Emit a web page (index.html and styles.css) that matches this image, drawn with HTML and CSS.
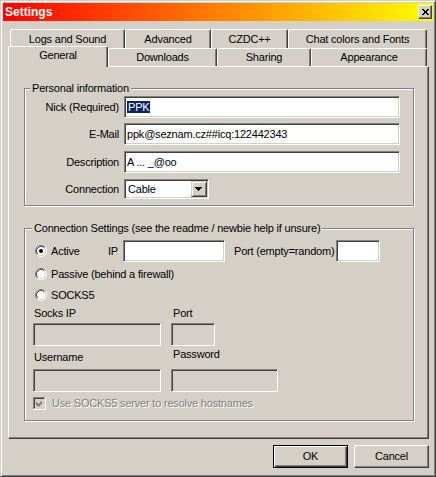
FILE: index.html
```html
<!DOCTYPE html>
<html>
<head>
<meta charset="utf-8">
<title>Settings</title>
<link rel="stylesheet" href="styles.css">
</head>
<body>
<div class="window">
  <div class="titlebar">
    <span class="title">Settings</span>
    <span class="closebtn">
      <svg width="12" height="12" viewBox="0 0 12 12" shape-rendering="crispEdges">
        <path d="M3 3 L9 9 M4 3 L10 9 M9 3 L3 9 M10 3 L4 9" stroke="#000" stroke-width="1" fill="none"/>
      </svg>
    </span>
  </div>

  <div class="tabs">
    <div class="tabrow row1">
      <div class="tab t-logs">Logs and Sound</div>
      <div class="tab t-adv">Advanced</div>
      <div class="tab t-czdc">CZDC++</div>
      <div class="tab t-chat">Chat colors and Fonts</div>
    </div>
    <div class="tabrow row2">
      <div class="tab t-gen sel">General</div>
      <div class="tab t-down">Downloads</div>
      <div class="tab t-share">Sharing</div>
      <div class="tab t-app">Appearance</div>
    </div>
  </div>

  <div class="panel">
    <div class="group g1">
      <div class="legend">Personal information</div>
      <div class="frow r1">
        <span class="flabel">Nick (Required)</span>
        <div class="field wide"><span class="hl">PPK</span></div>
      </div>
      <div class="frow r2">
        <span class="flabel">E-Mail</span>
        <div class="field wide">ppk@seznam.cz##icq:122442343</div>
      </div>
      <div class="frow r3">
        <span class="flabel">Description</span>
        <div class="field wide">A ... _@oo</div>
      </div>
      <div class="frow r4">
        <span class="flabel">Connection</span>
        <div class="combo">
          <span class="combotext">Cable</span>
          <span class="dropbtn">
            <svg width="14" height="14" viewBox="0 0 14 14" shape-rendering="crispEdges">
              <path d="M3 5 H10 V6 H9 V7 H8 V8 H7 V9 H6 V8 H5 V7 H4 V6 H3 Z" fill="#000"/>
            </svg>
          </span>
        </div>
      </div>
    </div>

    <div class="group g2">
      <div class="legend">Connection Settings (see the readme / newbie help if unsure)</div>
      <div class="crow active">
        <div class="opt optw">
          <svg class="radio" width="12" height="12" viewBox="0 0 12 12">
            <circle cx="6" cy="6" r="5" fill="#fff"/>
            <path d="M2.11 9.89 A5.5 5.5 0 0 1 9.89 2.11" stroke="#808080" fill="none"/>
            <path d="M9.89 2.11 A5.5 5.5 0 0 1 2.11 9.89" stroke="#fff" fill="none"/>
            <path d="M2.82 9.18 A4.5 4.5 0 0 1 9.18 2.82" stroke="#404040" fill="none"/>
            <path d="M9.18 2.82 A4.5 4.5 0 0 1 2.82 9.18" stroke="#d4d0c8" fill="none"/>
            <circle cx="6" cy="6" r="2" fill="#000"/>
          </svg>
          <span>Active</span>
        </div>
        <span class="iplbl">IP</span>
        <div class="field ipfield"></div>
        <span class="portlbl">Port (empty=random)</span>
        <div class="field portfield"></div>
      </div>
      <div class="crow passive">
        <div class="opt">
          <svg class="radio" width="12" height="12" viewBox="0 0 12 12">
            <circle cx="6" cy="6" r="5" fill="#fff"/>
            <path d="M2.11 9.89 A5.5 5.5 0 0 1 9.89 2.11" stroke="#808080" fill="none"/>
            <path d="M9.89 2.11 A5.5 5.5 0 0 1 2.11 9.89" stroke="#fff" fill="none"/>
            <path d="M2.82 9.18 A4.5 4.5 0 0 1 9.18 2.82" stroke="#404040" fill="none"/>
            <path d="M9.18 2.82 A4.5 4.5 0 0 1 2.82 9.18" stroke="#d4d0c8" fill="none"/>
          </svg>
          <span>Passive (behind a firewall)</span>
        </div>
      </div>
      <div class="crow socks">
        <div class="opt">
          <svg class="radio" width="12" height="12" viewBox="0 0 12 12">
            <circle cx="6" cy="6" r="5" fill="#fff"/>
            <path d="M2.11 9.89 A5.5 5.5 0 0 1 9.89 2.11" stroke="#808080" fill="none"/>
            <path d="M9.89 2.11 A5.5 5.5 0 0 1 2.11 9.89" stroke="#fff" fill="none"/>
            <path d="M2.82 9.18 A4.5 4.5 0 0 1 9.18 2.82" stroke="#404040" fill="none"/>
            <path d="M9.18 2.82 A4.5 4.5 0 0 1 2.82 9.18" stroke="#d4d0c8" fill="none"/>
          </svg>
          <span>SOCKS5</span>
        </div>
      </div>
      <div class="lrow lrow1">
        <span class="col1 lbl">Socks IP</span>
        <span class="col2 lbl">Port</span>
      </div>
      <div class="irow irow1">
        <div class="field dis col1"></div>
        <div class="field dis col2 sport"></div>
      </div>
      <div class="lrow lrow2">
        <span class="col1 lbl lbl-low">Username</span>
        <span class="col2 lbl lbl-high">Password</span>
      </div>
      <div class="irow irow2">
        <div class="field dis col1"></div>
        <div class="field dis col2 spass"></div>
      </div>
      <div class="chkrow">
        <svg class="chk" width="13" height="13" viewBox="0 0 13 13" shape-rendering="crispEdges">
          <rect x="0" y="0" width="13" height="13" fill="#d4d0c8"/>
          <path d="M0 0.5 H12 M0.5 0 V12" stroke="#808080"/>
          <path d="M1 1.5 H11 M1.5 1 V11" stroke="#404040"/>
          <path d="M0 12.5 H13 M12.5 0 V13" stroke="#fff"/>
          <path d="M3 5 L5 7 L9 3 V6 L5 10 L3 8 Z" fill="#808080"/>
        </svg>
        <span class="distext">Use SOCKS5 server to resolve hostnames</span>
      </div>
    </div>
  </div>

  <div class="buttons">
    <div class="btn default"><span>OK</span></div>
    <div class="btn">Cancel</div>
  </div>
</div>
</body>
</html>
```
FILE: styles.css
```css
html, body {
  margin: 0;
  padding: 0;
  background: #d4d0c8;
}

body {
  font-family: "Liberation Sans", Arial, sans-serif;
  font-size: 11px;
  line-height: 13px;
  letter-spacing: -0.2px;
  color: #000;
}

.window {
  width: 436px;
  height: 477px;
  box-sizing: border-box;
  background: #d4d0c8;
  border: 1px solid;
  border-color: #d4d0c8 #404040 #404040 #d4d0c8;
  box-shadow: inset 1px 1px 0 #fff, inset -1px -1px 0 #808080;
  padding: 2px 2px 2px 2px;
}

/* Title bar */
.titlebar {
  height: 18px;
  display: flex;
  align-items: center;
  justify-content: space-between;
  background: linear-gradient(to right, #ff0000 0%, #ff8000 50%, #ffff00 100%);
  padding-left: 2px;
}

.title {
  color: #fff;
  font-weight: bold;
  font-size: 12px;
  line-height: 14px;
  letter-spacing: 0;
}

.closebtn {
  width: 14px;
  height: 14px;
  box-sizing: border-box;
  background: #d4d0c8;
  border: 1px solid;
  border-color: #fff #404040 #404040 #fff;
  box-shadow: inset -1px -1px 0 #808080;
  display: flex;
  align-items: center;
  justify-content: center;
  margin-right: 1px;
}

.closebtn svg {
  display: block;
  margin-left: -1px;
  margin-top: -1px;
}

/* Tabs */
.tabs {
  margin-top: 8px;
}

.tabrow {
  display: flex;
}

.row1 {
  height: 19px;
  padding-left: 7px;
}

.row2 {
  height: 18px;
  padding-left: 5px;
}

.tab {
  box-sizing: border-box;
  background: #d4d0c8;
  border-left: 1px solid #fff;
  border-top: 1px solid #fff;
  border-right: 1px solid #404040;
  box-shadow: inset -1px 0 0 #808080;
  border-top-left-radius: 2px;
  border-top-right-radius: 2px;
  text-align: center;
  white-space: nowrap;
}

.row1 .tab {
  height: 19px;
  padding-top: 3px;
}

.row2 .tab {
  height: 18px;
  padding-top: 2px;
}

.t-logs { width: 115px; }
.t-adv { width: 86px; }
.t-czdc { width: 77px; }
.t-chat { width: 139px; }

.t-gen { width: 100px; }
.t-down { width: 109px; }
.t-share { width: 94px; }
.t-app { width: 116px; }

.row2 .tab.sel {
  position: relative;
  z-index: 1;
  height: 21px;
  margin-top: -2px;
  padding-top: 2px;
}

/* Panel */
.panel {
  box-sizing: border-box;
  width: 421px;
  height: 373px;
  margin-left: 5px;
  border-top: 1px solid #fff;
  border-left: 1px solid #fff;
  border-right: 1px solid #404040;
  border-bottom: 1px solid #404040;
  box-shadow: inset -1px -1px 0 #808080;
  padding-left: 15px;
  padding-top: 21px;
}

.group {
  box-sizing: border-box;
  width: 390px;
  border: 1px solid #808080;
  box-shadow: 1px 1px 0 #fff, inset 1px 1px 0 #fff;
}

.g1 {
  height: 118px;
}

.g2 {
  height: 193px;
  margin-top: 22px;
  padding-left: 8px;
}

.legend {
  display: block;
  width: max-content;
  height: 13px;
  margin-top: -7px;
  margin-left: 5px;
  padding: 0 2px;
  background: #d4d0c8;
  white-space: nowrap;
}

.g2 .legend {
  margin-left: -1px;
}

/* Personal info rows */
.frow {
  display: flex;
  align-items: center;
}

.r1 { margin-top: 1px; }
.r2 { margin-top: 5px; }
.r3 { margin-top: 6px; }
.r4 { margin-top: 6px; }

.flabel {
  width: 94px;
  text-align: right;
  margin-right: 5px;
  white-space: nowrap;
}

.field {
  box-sizing: border-box;
  height: 22px;
  background: #fff;
  border: 1px solid;
  border-color: #808080 #fff #fff #808080;
  box-shadow: inset 1px 1px 0 #404040, inset -1px -1px 0 #d4d0c8;
  padding: 4px 0 0 2px;
  white-space: nowrap;
  overflow: hidden;
}

.field.wide {
  width: 276px;
}

.hl {
  background: #0a246a;
  color: #fff;
  padding: 0 1px;
}

.combo {
  box-sizing: border-box;
  width: 85px;
  height: 20px;
  background: #fff;
  border: 1px solid;
  border-color: #808080 #fff #fff #808080;
  box-shadow: inset 1px 1px 0 #404040, inset -1px -1px 0 #d4d0c8;
  padding: 1px 1px 1px 3px;
  display: flex;
  align-items: center;
  justify-content: space-between;
}

.combotext {
  padding-top: 1px;
}

.dropbtn {
  box-sizing: border-box;
  width: 16px;
  height: 16px;
  background: #d4d0c8;
  border: 1px solid;
  border-color: #d4d0c8 #404040 #404040 #d4d0c8;
  box-shadow: inset 1px 1px 0 #fff, inset -1px -1px 0 #808080;
  display: flex;
  align-items: center;
  justify-content: center;
}

.dropbtn svg {
  display: block;
}

/* Connection settings */
.crow {
  display: flex;
  align-items: center;
}

.active {
  height: 22px;
  margin-top: 5px;
}

.passive {
  height: 20px;
  margin-top: 2px;
}

.socks {
  height: 20px;
  margin-top: 1px;
}

.opt {
  display: flex;
  align-items: center;
  margin-left: 2px;
  white-space: nowrap;
}

.optw {
  width: 73px;
}

.radio {
  display: block;
  flex: none;
  margin-right: 4px;
}

.iplbl {
  width: 10px;
  margin-right: 5px;
}

.ipfield {
  width: 102px;
}

.portlbl {
  width: 102px;
  margin-left: 9px;
  white-space: nowrap;
}

.portfield {
  width: 44px;
}

.lrow {
  display: flex;
}

.lrow1 {
  height: 14px;
  margin-top: 2px;
}

.lrow2 {
  height: 16px;
  margin-top: 2px;
}

.col1 {
  width: 128px;
  flex: none;
}

.col2 {
  margin-left: 10px;
}

.lbl {
  padding-left: 1px;
  white-space: nowrap;
}

.lbl-low {
  align-self: flex-end;
}

.lbl-high {
  align-self: flex-start;
}

.irow {
  display: flex;
}

.irow1 {
  margin-top: 2px;
}

.irow2 {
  margin-top: 5px;
}

.field.dis {
  height: 23px;
  background: #d4d0c8;
}

.sport {
  width: 44px;
}

.spass {
  width: 107px;
}

.chkrow {
  display: flex;
  align-items: center;
  height: 13px;
  margin-top: 5px;
}

.chk {
  display: block;
  flex: none;
  margin-right: 6px;
}

.distext {
  color: #808080;
  text-shadow: 1px 1px 0 #fff;
  white-space: nowrap;
}

/* Buttons */
.buttons {
  display: flex;
  justify-content: flex-end;
  gap: 6px;
  margin-top: 6px;
  padding-right: 4px;
}

.btn {
  box-sizing: border-box;
  width: 75px;
  height: 23px;
  border: 1px solid;
  border-color: #fff #404040 #404040 #fff;
  box-shadow: inset -1px -1px 0 #808080;
  display: flex;
  align-items: center;
  justify-content: center;
}

.btn.default {
  border-color: #000;
  box-shadow: inset 1px 1px 0 #fff, inset -1px -1px 0 #404040, inset -2px -2px 0 #808080;
}
```
